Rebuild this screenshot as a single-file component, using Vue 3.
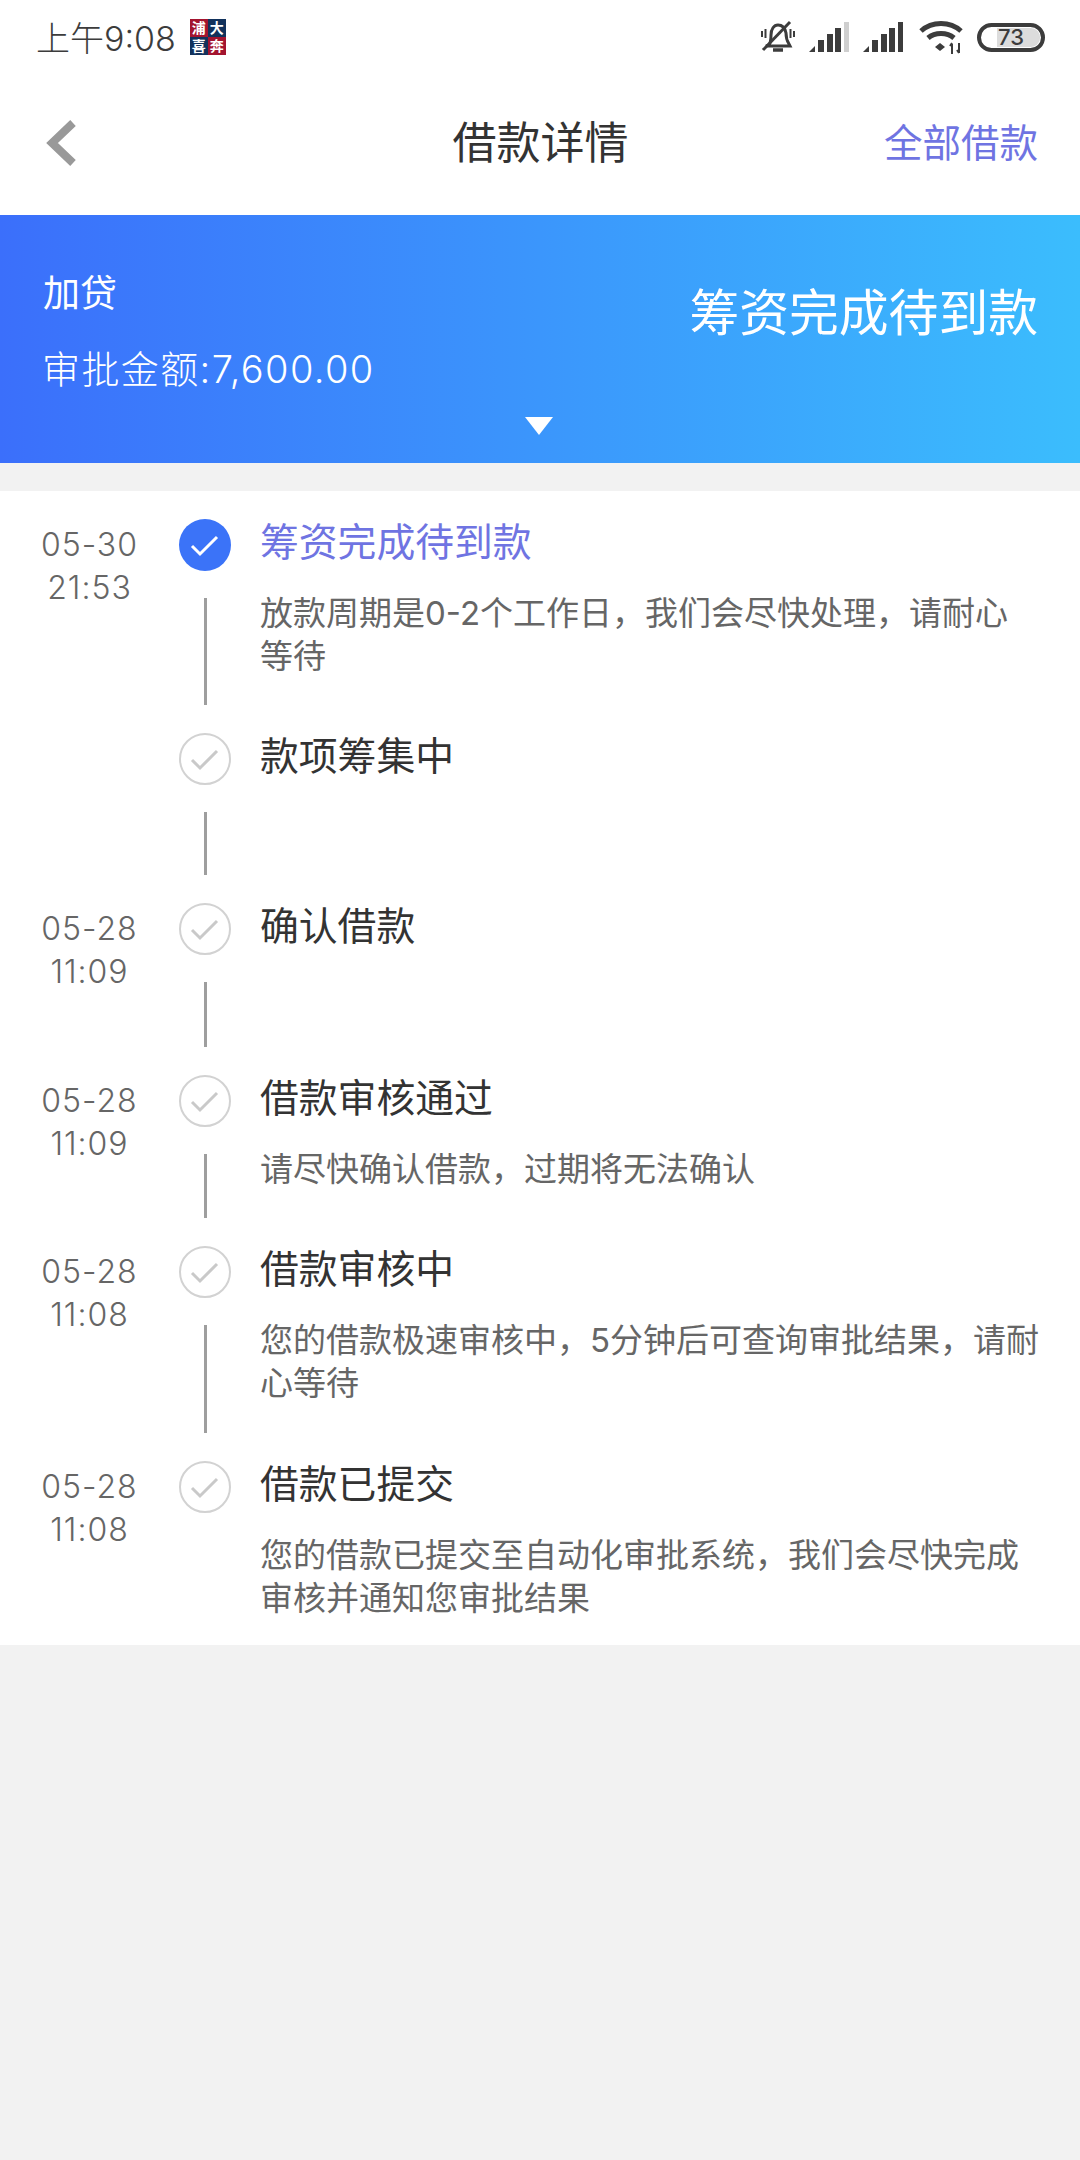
<script setup>
const c = '\uFF0C'
const steps = [
  { date: '05-30', time: '21:53', title: '筹资完成待到款', desc: `放款周期是0-2个工作日${c}我们会尽快处理${c}请耐心等待`, active: true, h: 214 },
  { date: '', time: '', title: '款项筹集中', desc: '', h: 170 },
  { date: '05-28', time: '11:09', title: '确认借款', desc: '', h: 172 },
  { date: '05-28', time: '11:09', title: '借款审核通过', desc: `请尽快确认借款${c}过期将无法确认`, h: 171 },
  { date: '05-28', time: '11:08', title: '借款审核中', desc: `您的借款极速审核中${c}5分钟后可查询审批结果${c}请耐心等待`, h: 215 },
  { date: '05-28', time: '11:08', title: '借款已提交', desc: `您的借款已提交至自动化审批系统${c}我们会尽快完成审核并通知您审批结果`, last: true, h: 184 },
]
</script>

<template>
  <div class="page">
    <div class="status">
      <span class="clock">上午9:08</span>
      <span class="logo">
        <i class="red">浦</i><i class="navy">大</i><i class="navy">喜</i><i class="red">奔</i>
      </span>
      <span class="spacer"></span>
      <svg class="s-bell" width="36" height="34" viewBox="0 0 36 34" fill="none" stroke="#3c3c3c" stroke-width="3">
        <path d="M9 25c2-3 2-6 2-10 0-6 3-10 7-10s7 3 8 8c0 5 1 8 3 11l1 2H6z" />
        <path d="M13 30h10" stroke-width="3.5" />
        <path d="M3 30 30 2" />
        <path d="M2 11v6M5.500 9v9M30.500 9v9M34 11v6" stroke-width="2" />
      </svg>
      <svg class="s-sig" width="40" height="32" viewBox="0 0 40 32">
        <path d="M0 31l6-6v6z" fill="#3c3c3c" />
        <rect x="9" y="19" width="6" height="12" fill="#3c3c3c" />
        <rect x="18" y="13" width="6" height="18" fill="#3c3c3c" />
        <rect x="26" y="7" width="6" height="24" fill="#3c3c3c" />
        <rect x="35" y="1" width="5" height="30" fill="#cfcfcf" />
      </svg>
      <svg class="s-sig s-sig2" width="40" height="32" viewBox="0 0 40 32">
        <path d="M0 31l6-6v6z" fill="#3c3c3c" />
        <rect x="9" y="19" width="6" height="12" fill="#3c3c3c" />
        <rect x="18" y="13" width="6" height="18" fill="#3c3c3c" />
        <rect x="26" y="7" width="6" height="24" fill="#3c3c3c" />
        <rect x="35" y="1" width="5" height="30" fill="#3c3c3c" />
      </svg>
      <svg class="s-wifi" width="44" height="34" viewBox="0 0 44 34" fill="none" stroke="#3c3c3c" stroke-width="5">
        <path d="M2 11c11-10 29-10 40 0" />
        <path d="M9 18c7-6 19-6 26 0" />
        <path d="M16 27l5-4 5 4-5 4z" fill="#3c3c3c" stroke="none" />
        <path d="M33 34v-10M31 26l2-3M40 23v10M38 30l2 3" stroke-width="2" />
      </svg>
      <span class="battery"><span class="fill"></span><span class="pct">73</span></span>
    </div>

    <header class="nav">
      <svg class="back" width="36" height="50" viewBox="0 0 36 50" fill="none">
        <path d="M30 5 9 25l21 20" stroke="#999" stroke-width="8" />
      </svg>
      <h1 class="nav-title">借款详情</h1>
      <span class="nav-link">全部借款</span>
    </header>

    <section class="banner">
      <div class="banner-top">
        <div class="banner-left">
          <div class="kind">加贷</div>
          <div class="amount">审批金额:7,600.00</div>
        </div>
        <div class="state">筹资完成待到款</div>
      </div>
      <div class="caret"></div>
    </section>

    <section class="list">
      <div v-for="(s, i) in steps" :key="i" class="row" :style="{ height: s.h + 'px' }">
        <div class="when">
          <div>{{ s.date }}</div>
          <div>{{ s.time }}</div>
        </div>
        <div class="rail">
          <svg class="dot" width="52" height="52" viewBox="0 0 52 52">
            <circle v-if="s.active" cx="26" cy="26" r="26" fill="#3b73f8" />
            <circle v-else cx="26" cy="26" r="25" fill="#fff" stroke="#d2d2d2" stroke-width="2" />
            <path d="M13 27l8 8 17-17" fill="none" :stroke="s.active ? '#fff' : '#c9c9c9'" stroke-width="3" />
          </svg>
          <div v-if="!s.last" class="line"></div>
        </div>
        <div class="body">
          <div class="title" :class="{ on: s.active }">{{ s.title }}</div>
          <p v-if="s.desc" class="desc">{{ s.desc }}</p>
        </div>
      </div>
    </section>
  </div>
</template>

<style>
html, body { margin: 0; background: #f2f2f2; }
</style>

<style scoped>
.page {
  width: 1080px;
  height: 2160px;
  background: #f2f2f2;
  font-family: Inter, "Noto Sans CJK SC", sans-serif;
  color: #333;
  overflow: hidden;
}
.status {
  height: 74px;
  background: #fff;
  display: flex;
  align-items: center;
  padding: 0 35px 0 36px;
  box-sizing: border-box;
}
.clock {
  font-size: 34px;
  font-weight: 300;
  color: #3c3c3c;
  margin-top: -2px;
}
.logo {
  width: 36px;
  height: 36px;
  margin-left: 14px;
  display: grid;
  grid-template-columns: 18px 18px;
  grid-template-rows: 18px 18px;
}
.logo i {
  font-style: normal;
  font-size: 14px;
  line-height: 18px;
  text-align: center;
  color: #fff;
  font-weight: 700;
}
.red { background: #a3142f; }
.navy { background: #12325c; }
.spacer { flex: 1; }
.s-bell { margin-right: 13px; }
.s-sig { margin-right: 14px; }
.s-sig2 { margin-right: 16px; }
.s-wifi { margin-right: 14px; }
.battery {
  position: relative;
  width: 68px;
  height: 29px;
  border: 4px solid #3c3c3c;
  border-radius: 15px;
  box-sizing: border-box;
  display: block;
}
.fill {
  position: absolute;
  left: 16px;
  right: 1px;
  top: 1px;
  bottom: 1px;
  background: #dcdcdc;
  border-radius: 0 9px 9px 0;
}
.pct {
  position: absolute;
  left: 0;
  right: 0;
  top: -2px;
  text-align: center;
  font-size: 22px;
  font-weight: 500;
  line-height: 25px;
  color: #3c3c3c;
}
.nav {
  height: 141px;
  background: #fff;
  display: grid;
  grid-template-columns: 1fr auto 1fr;
  align-items: center;
  padding: 0 42px 0 43px;
  box-sizing: border-box;
}
.back { margin-top: -4px; }
.nav-title {
  margin: 0;
  padding-bottom: 10px;
  font-size: 44px;
  font-weight: 400;
  color: #333;
}
.nav-link {
  justify-self: end;
  padding-bottom: 10px;
  font-size: 38.5px;
  color: #6f74e2;
}
.banner {
  height: 248px;
  background: linear-gradient(90deg, #3b6ffb 0%, #3bbdfd 100%);
  color: #fff;
  box-sizing: border-box;
  padding: 0 42px 0 42px;
  position: relative;
  margin-bottom: 28px;
}
.banner-top {
  display: flex;
  justify-content: space-between;
  align-items: flex-start;
}
.banner-left { padding-top: 54px; }
.kind { font-size: 37px; line-height: 50px; margin: 0 0 25px 1px; }
.amount { font-size: 38px; line-height: 50px; font-weight: 300; letter-spacing: 1.4px; }
.state { font-size: 49.8px; line-height: 70px; padding-top: 63px; }
.caret {
  position: absolute;
  left: 525px;
  top: 202px;
  width: 0;
  height: 0;
  border-left: 14px solid transparent;
  border-right: 14px solid transparent;
  border-top: 18px solid #fff;
}
.list {
  background: #fff;
  box-sizing: border-box;
  padding-top: 28px;
  height: 1154px;
}
.row {
  display: grid;
  grid-template-columns: 179px 52px 1fr;
}
.when {
  text-align: center;
  font-size: 32px;
  line-height: 43px;
  padding-top: 4px;
  color: #666;
  font-weight: 300;
  letter-spacing: 1px;
}
.rail {
  display: flex;
  flex-direction: column;
  align-items: center;
}
.dot { flex: none; }
.line {
  width: 3px;
  flex: 1;
  background: #9e9e9e;
  margin-top: 27px;
  margin-bottom: 28px;
}
.body {
  padding-left: 29px;
  padding-right: 40px;
}
.title {
  font-size: 38.8px;
  line-height: 46px;
  color: #333;
}
.title.on { color: #6f74e2; }
.desc {
  margin: 27px 0 0;
  font-size: 33px;
  line-height: 43px;
  color: #666;
}
</style>
